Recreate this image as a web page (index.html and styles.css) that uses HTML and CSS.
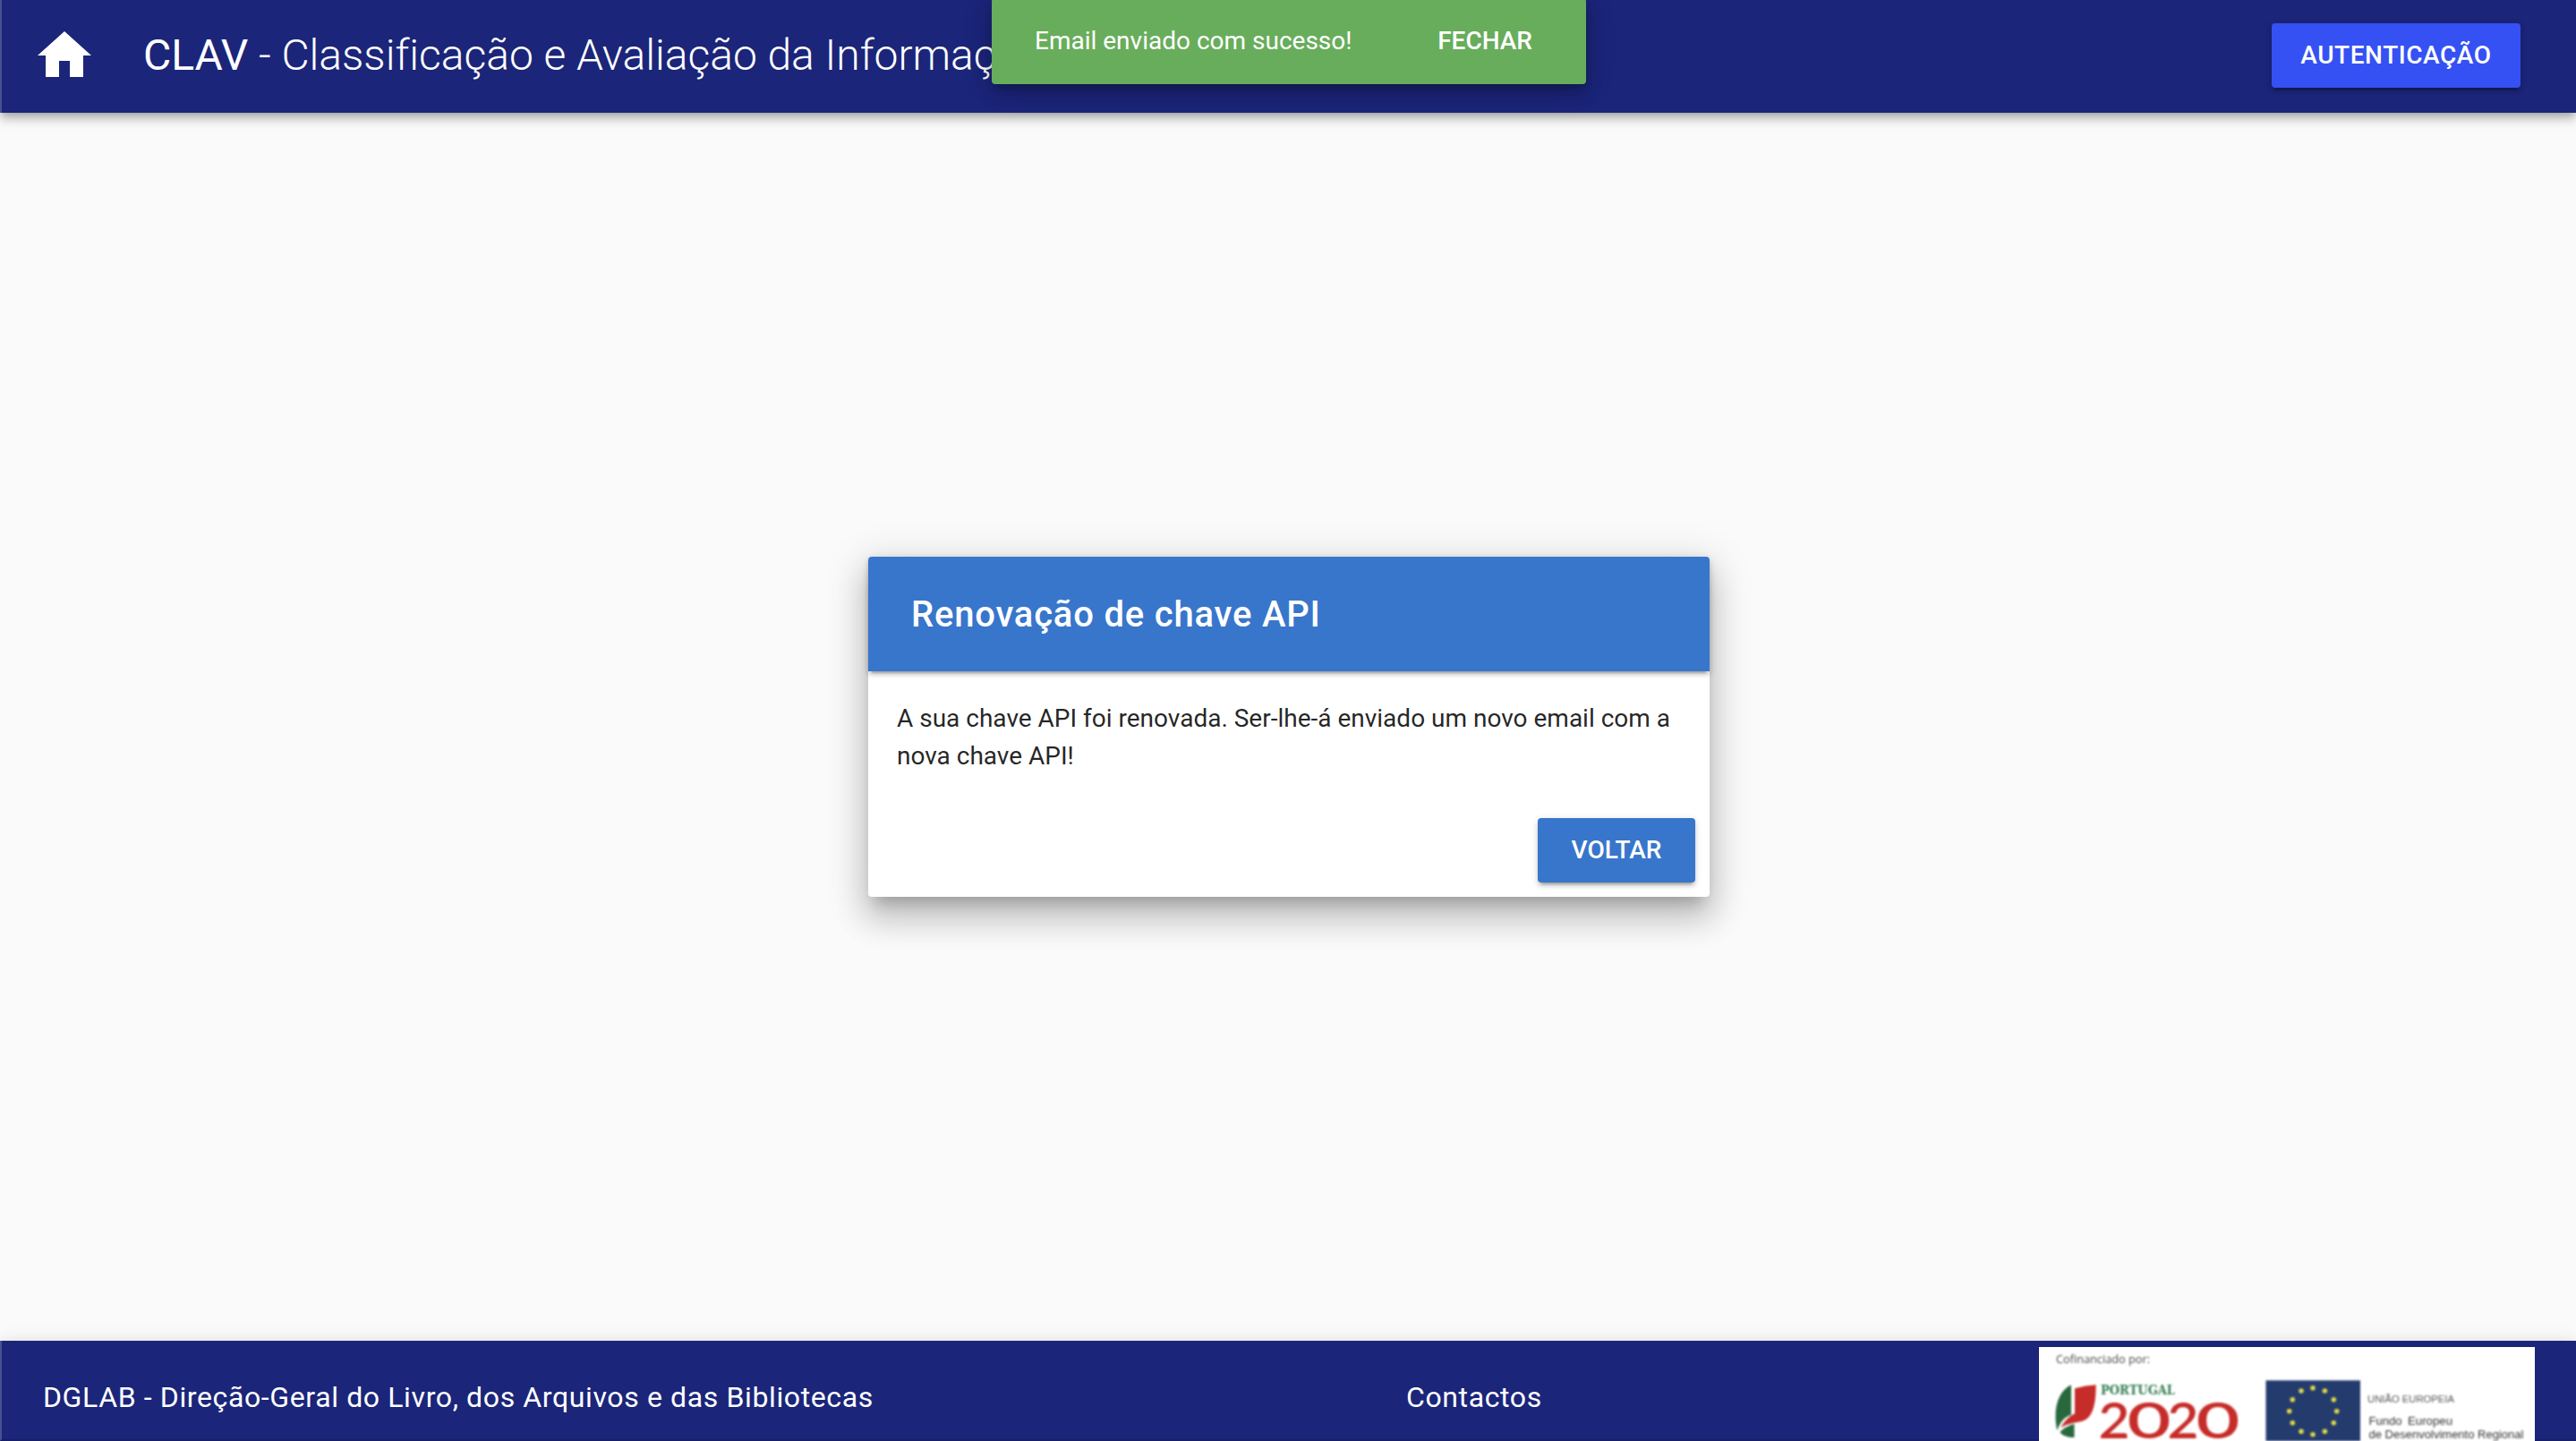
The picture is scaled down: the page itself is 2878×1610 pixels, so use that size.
FILE: index.html
```html
<!DOCTYPE html>
<html lang="pt">
<head>
<meta charset="utf-8">
<title>CLAV</title>
<link rel="stylesheet" href="styles.css">
</head>
<body>
<div class="app">
  <header class="toolbar">
    <a class="home" aria-label="Início">
      <svg viewBox="0 0 24 24" width="72" height="72"><path fill="#fff" d="M10,20V14H14V20H19V12H22L12,3L2,12H5V20H10Z"/></svg>
    </a>
    <h1 class="brand"><span class="brand-name">CLAV</span> - Classificação e Avaliação da Informação</h1>
    <button class="btn btn-login">AUTENTICAÇÃO</button>
  </header>
  <div class="snackbar">
    <span class="snackbar-text">Email enviado com sucesso!</span>
    <button class="snackbar-action">FECHAR</button>
  </div>
  <main class="content">
    <section class="card">
      <h2 class="card-title">Renovação de chave API</h2>
      <p class="card-text">A sua chave API foi renovada. Ser-lhe-á enviado um novo email com a nova chave API!</p>
      <div class="card-actions"><button class="btn btn-back">VOLTAR</button></div>
    </section>
  </main>
  <footer class="footer">
    <span class="footer-org">DGLAB - Direção-Geral do Livro, dos Arquivos e das Bibliotecas</span>
    <a class="footer-link">Contactos</a>
    <div class="sponsors">
      <svg class="sponsors-art" viewBox="0 0 554 105" width="554" height="105">
        <text class="s-small" x="19" y="17.500" textLength="105" lengthAdjust="spacingAndGlyphs">Cofinanciado por:</text>
        <path fill="#29683c" d="M36,42.300C22,49 15,68 20.300,93.300C24,83 29,78 36,75.700Z"/>
        <path fill="#c62c29" d="M40,46.300Q52,43 63.700,42.300C63.700,70 58,80 48,83C37,85 28,87 24,90.500C29,82 34,77 40,74.500Z"/>
        <path fill="#29683c" d="M23.500,95C28,90 34,87.500 39.500,86V101C32,101 26,99 23.500,95Z"/>
        <text class="s-portugal" x="69" y="52.700" textLength="83" lengthAdjust="spacingAndGlyphs">PORTUGAL</text>
        <text class="s-year" y="101.500"><tspan x="66.500" textLength="35" lengthAdjust="spacingAndGlyphs">2</tspan><tspan x="98.500" textLength="49" lengthAdjust="spacingAndGlyphs">0</tspan><tspan x="143.500" textLength="35" lengthAdjust="spacingAndGlyphs">2</tspan><tspan x="175.500" textLength="49" lengthAdjust="spacingAndGlyphs">0</tspan></text>
        <rect x="253.500" y="37.300" width="105.500" height="70" fill="#243b6e"/>
        <g class="stars">
          <circle cx="306" cy="45.700" r="2.800"/><circle cx="319.400" cy="49" r="2.800"/><circle cx="329.300" cy="58.700" r="2.800"/>
          <circle cx="332.700" cy="71.700" r="2.800"/><circle cx="329.300" cy="84.700" r="2.800"/><circle cx="319.400" cy="94.300" r="2.800"/>
          <circle cx="306" cy="97.700" r="2.800"/><circle cx="293" cy="94.300" r="2.800"/><circle cx="283.300" cy="84.700" r="2.800"/>
          <circle cx="279.700" cy="71.700" r="2.800"/><circle cx="283.300" cy="58.700" r="2.800"/><circle cx="293" cy="49" r="2.800"/>
        </g>
        <text class="s-eu" x="367" y="62.300" textLength="97" lengthAdjust="spacingAndGlyphs">UNIÃO EUROPEIA</text>
        <text class="s-fund" x="368.500" y="87" textLength="37" lengthAdjust="spacingAndGlyphs">Fundo</text>
        <text class="s-fund" x="412" y="87" textLength="50" lengthAdjust="spacingAndGlyphs">Europeu</text>
        <text class="s-fund" x="368.500" y="102.300" textLength="173" lengthAdjust="spacingAndGlyphs">de Desenvolvimento Regional</text>
      </svg>
    </div>
  </footer>
</div>
</body>
</html>
```
FILE: styles.css
```css
* { box-sizing: border-box; }
body { margin: 0; font-family: Roboto, sans-serif; }
button { border: 0; padding: 0; font-family: inherit; color: #fff; }
h1, h2, p { margin: 0; }

.app {
  position: relative;
  display: flex;
  flex-direction: column;
  width: 2878px;
  height: 1610px;
  overflow: hidden;
  background: #fafafa;
}

.toolbar {
  display: flex;
  align-items: center;
  flex: none;
  height: 126px;
  padding: 0 62px 2px 34px;
  border-left: 2px solid #484f92;
  background: #1b2579;
  color: #fff;
  box-shadow: 0 4px 8px -2px rgba(0,0,0,.2), 0 8px 10px 0 rgba(0,0,0,.14), 0 2px 20px 0 rgba(0,0,0,.12);
}
.home { display: flex; margin-right: 52px; }
.brand { font-size: 48px; font-weight: 300; line-height: 64px; letter-spacing: -.02px; white-space: nowrap; }
.brand-name { font-weight: 400; }

.btn {
  height: 72px;
  padding-bottom: 2px;
  border-radius: 4px;
  font-size: 28px;
  font-weight: 500;
  box-shadow: 0 6px 2px -4px rgba(0,0,0,.2), 0 4px 4px 0 rgba(0,0,0,.14), 0 2px 10px 0 rgba(0,0,0,.12);
}
.btn-login { width: 278px; margin-left: auto; background: #3551f3; letter-spacing: .02em; }
.btn-back { width: 176px; background: #3876cb; }

.snackbar {
  position: absolute;
  left: 1108px;
  top: -2px;
  display: flex;
  align-items: center;
  justify-content: space-between;
  width: 664px;
  height: 96px;
  padding: 0 60px 2px 48px;
  border-radius: 4px;
  background: #68ad5c;
  color: #fff;
  font-size: 28px;
  box-shadow: 0 6px 10px -2px rgba(0,0,0,.2), 0 12px 20px 0 rgba(0,0,0,.14), 0 2px 36px 0 rgba(0,0,0,.12);
}
.snackbar-action { background: none; font-size: 28px; font-weight: 500; }

.content { display: flex; flex: 1; justify-content: center; align-items: flex-start; padding: 496px 0 0 2px; }
.card {
  width: 940px;
  height: 380px;
  border-radius: 4px;
  background: #fff;
  color: rgba(0,0,0,.87);
  box-shadow: 0 14px 16px -8px rgba(0,0,0,.2), 0 24px 34px 4px rgba(0,0,0,.14), 0 10px 44px 8px rgba(0,0,0,.12);
}
.card-title {
  display: flex;
  align-items: center;
  height: 128px;
  padding-left: 48px;
  border-radius: 4px 4px 0 0;
  background: #3876cb;
  color: #fff;
  font-size: 40px;
  font-weight: 500;
  letter-spacing: .02em;
  box-shadow: 0 6px 2px -4px rgba(0,0,0,.2), 0 4px 4px 0 rgba(0,0,0,.14), 0 2px 10px 0 rgba(0,0,0,.12);
}
.card-text { padding: 32px 32px 0; font-size: 28px; line-height: 42px; }
.card-actions { display: flex; justify-content: flex-end; padding: 48px 16px 16px; }

.footer {
  display: flex;
  flex: none;
  height: 112px;
  padding-left: 46px;
  border-left: 2px solid #484f92;
  border-bottom: 2px solid #171f67;
  background: #1b2579;
  color: #fff;
  font-size: 32px;
  line-height: 126px;
  letter-spacing: .62px;
  box-shadow: 0 4px 8px -2px rgba(0,0,0,.2), 0 8px 10px 0 rgba(0,0,0,.14), 0 2px 20px 0 rgba(0,0,0,.12);
}
.footer-org { width: 1523px; white-space: nowrap; }
.footer-link { width: 707px; }
.sponsors { width: 554px; height: 105px; margin-top: 7px; background: #fff; letter-spacing: 0; }
.sponsors-art { display: block; filter: blur(.8px); }
.s-small { font: 12px "Open Sans", sans-serif; fill: #444; }
.s-portugal { font: bold 15px "DejaVu Serif", serif; fill: #337c50; }
.s-year { font: 600 56px Lato, sans-serif; fill: #c62c29; }
.stars { fill: #e0d845; }
.s-eu { font: 11px "Liberation Sans", sans-serif; fill: #555; }
.s-fund { font: 12px "Liberation Sans", sans-serif; fill: #333; }
```
